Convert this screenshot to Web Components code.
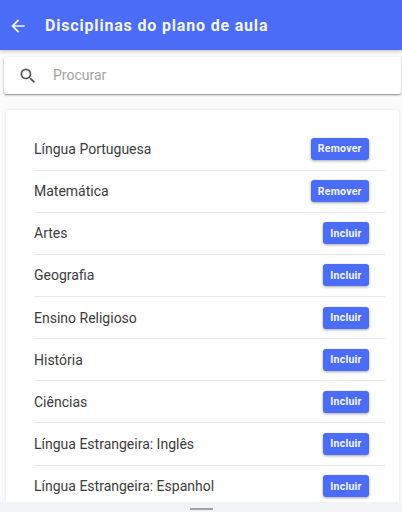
<!DOCTYPE html>
<html lang="pt">
<head>
<meta charset="utf-8">
<title>Disciplinas do plano de aula</title>
<style>
  html, body {
    margin: 0;
    height: 100%;
    overflow: hidden;
    background: #fafafa;
    font-family: Roboto, "Liberation Sans", sans-serif;
  }
  body {
    display: flex;
    flex-direction: column;
  }
</style>
</head>
<body>
<app-toolbar>Disciplinas do plano de aula</app-toolbar>
<search-bar placeholder="Procurar"></search-bar>
<subject-list>
  <subject-row selected>Língua Portuguesa</subject-row>
  <subject-row selected>Matemática</subject-row>
  <subject-row>Artes</subject-row>
  <subject-row>Geografia</subject-row>
  <subject-row>Ensino Religioso</subject-row>
  <subject-row>História</subject-row>
  <subject-row>Ciências</subject-row>
  <subject-row>Língua Estrangeira: Inglês</subject-row>
  <subject-row>Língua Estrangeira: Espanhol</subject-row>
</subject-list>
<nav-handle></nav-handle>

<script>
(function() {
    'use strict';

    class AppToolbar extends HTMLElement {
        constructor() {
            super();
            this.attachShadow({mode: 'open'}).innerHTML = `
                <style>
                    :host {
                        display: flex;
                        flex: none;
                        align-items: center;
                        height: 49px;
                        padding-top: 1px;
                        background-color: #4a6cf7;
                        color: #f4f6ff;
                        box-shadow: 0 1px 4px rgba(0, 0, 0, .25);
                        position: relative;
                    }
                    svg {
                        width: 20px;
                        height: 20px;
                        margin-left: 8px;
                        flex: none;
                    }
                    .title {
                        margin-left: 17px;
                        font-size: 16px;
                        font-weight: 700;
                        letter-spacing: .82px;
                        white-space: nowrap;
                    }
                </style>
                <svg viewBox="0 0 24 24"><path fill="currentColor" d="M20 11H7.83l5.59-5.59L12 4l-8 8 8 8 1.41-1.41L7.83 13H20z"/></svg>
                <div class="title"><slot></slot></div>
            `;
        }
    }

    class SearchBar extends HTMLElement {
        constructor() {
            super();
            this.attachShadow({mode: 'open'}).innerHTML = `
                <style>
                    :host {
                        display: flex;
                        flex: none;
                        align-items: center;
                        height: 37px;
                        margin: 7px 1px 0 4px;
                        background-color: #fff;
                        border-radius: 2px;
                        box-shadow: 0 1px 2px rgba(0, 0, 0, .45);
                    }
                    svg {
                        width: 20px;
                        height: 20px;
                        margin-left: 14px;
                        flex: none;
                    }
                    .placeholder {
                        margin: 0 0 2px 15px;
                        font-size: 14px;
                        color: #a3a3a3;
                    }
                </style>
                <svg viewBox="0 0 24 24"><path fill="#555" d="M15.5 14h-.79l-.28-.27A6.47 6.47 0 0 0 16 9.5 6.5 6.5 0 1 0 9.5 16c1.61 0 3.09-.59 4.23-1.57l.27.28v.79l5 4.99L20.49 19l-4.99-5zm-6 0C7.01 14 5 11.99 5 9.5S7.01 5 9.5 5 14 7.01 14 9.5 11.99 14 9.5 14z"/></svg>
                <div class="placeholder"></div>
            `;
            this.shadowRoot.querySelector('.placeholder').textContent = this.getAttribute('placeholder');
        }
    }

    class SubjectList extends HTMLElement {
        constructor() {
            super();
            this.attachShadow({mode: 'open'}).innerHTML = `
                <style>
                    :host {
                        display: block;
                        flex: 1;
                        min-height: 0;
                        overflow: hidden;
                        padding: 16px 3px 0 6px;
                    }
                    .card {
                        padding: 18.4px 14px 20px 28px;
                        background-color: #fff;
                        border-radius: 3px;
                        box-shadow: 0 0 3px rgba(0, 0, 0, .1);
                    }
                </style>
                <div class="card"><slot></slot></div>
            `;
        }
    }

    class SubjectRow extends HTMLElement {
        constructor() {
            super();
            this.attachShadow({mode: 'open'}).innerHTML = `
                <style>
                    :host {
                        display: flex;
                        align-items: center;
                        justify-content: space-between;
                        box-sizing: border-box;
                        height: 42.15px;
                        padding-right: 16px;
                        border-bottom: 1px solid #e8e8e8;
                        font-size: 14px;
                        color: #3c3c3c;
                    }
                    button {
                        height: 22px;
                        padding: 0 7.3px;
                        border: 0;
                        border-radius: 3px;
                        background-color: #4a6cf7;
                        color: #f4f6ff;
                        font: 700 10.5px Roboto, "Liberation Sans", sans-serif;
                        letter-spacing: .25px;
                        box-shadow: 0 1px 3px rgba(0, 0, 0, .35);
                    }
                </style>
                <span><slot></slot></span>
                <button></button>
            `;
            this.shadowRoot.querySelector('button').textContent = this.hasAttribute('selected') ? 'Remover' : 'Incluir';
        }
    }

    class NavHandle extends HTMLElement {
        constructor() {
            super();
            this.attachShadow({mode: 'open'}).innerHTML = `
                <style>
                    :host {
                        display: flex;
                        flex: none;
                        justify-content: center;
                        align-items: flex-end;
                        height: 10px;
                        padding-bottom: 2px;
                        box-sizing: border-box;
                        background-color: #f1f3f4;
                    }
                    div {
                        width: 23px;
                        height: 2px;
                        background-color: #a0a0a0;
                    }
                </style>
                <div></div>
            `;
        }
    }

    customElements.define('app-toolbar', AppToolbar);
    customElements.define('search-bar', SearchBar);
    customElements.define('subject-list', SubjectList);
    customElements.define('subject-row', SubjectRow);
    customElements.define('nav-handle', NavHandle);
})();
</script>
</body>
</html>
